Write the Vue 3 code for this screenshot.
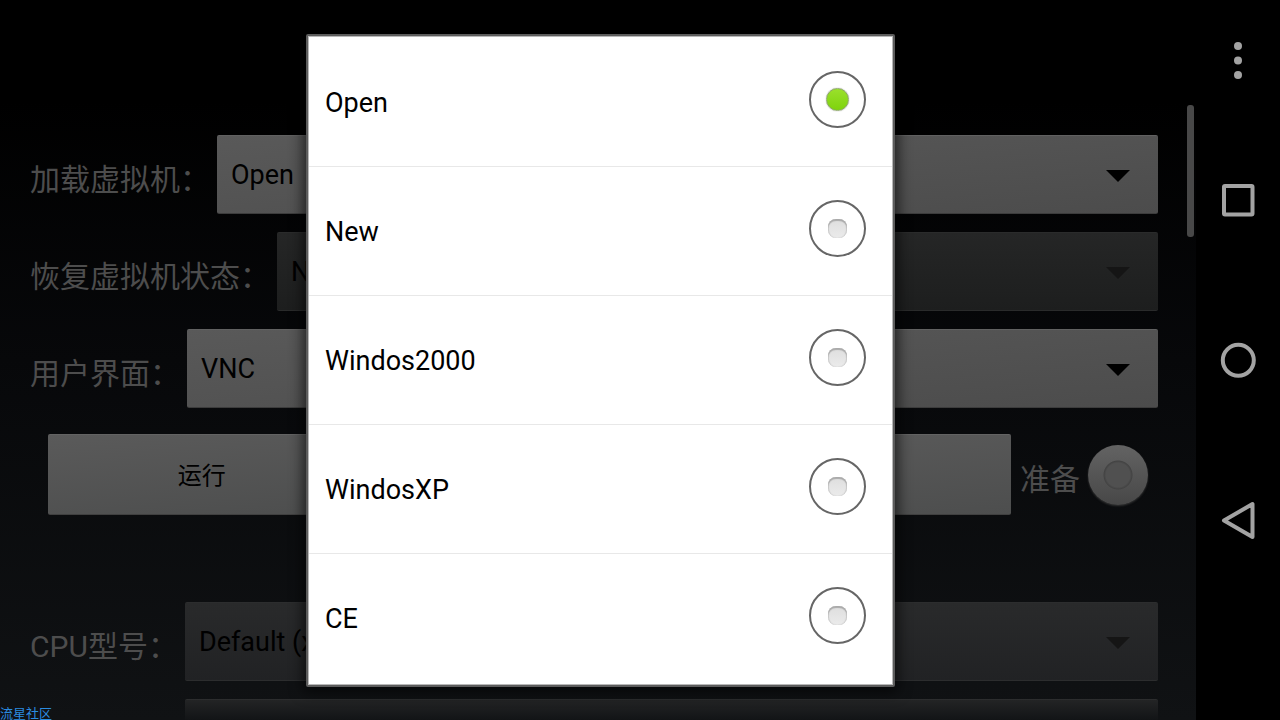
<script setup>
import { ref } from 'vue'

const choices = ['Open', 'New', 'Windos2000', 'WindosXP', 'CE']
const machine = ref('Open')

const fields = [
  { id: 'machine', label: '加载虚拟机：', value: 'Open', disabled: false },
  { id: 'snapshot', label: '恢复虚拟机状态：', value: 'None', disabled: true },
  { id: 'ui', label: '用户界面：', value: 'VNC', disabled: false }
]
</script>

<template>
  <div class="screen">
    <main class="app">
      <form class="settings" @submit.prevent>
        <div v-for="f in fields" :key="f.id" class="row">
          <label class="caption" :for="f.id">{{ f.label }}</label>
          <div class="spinner" :class="{ off: f.disabled }">
            <select :id="f.id" :disabled="f.disabled">
              <option>{{ f.value }}</option>
            </select>
            <svg class="arrow" viewBox="0 0 24 12"><path d="M0 0H24L12 12Z" /></svg>
          </div>
        </div>

        <div class="actions">
          <div class="buttons">
            <button type="button">运行</button>
            <button type="button">停止</button>
            <button type="button">重启</button>
          </div>
          <label class="caption" for="ready">准备</label>
          <input id="ready" class="status" type="radio" name="status" />
        </div>

        <div class="row">
          <label class="caption" for="cpu">CPU型号：</label>
          <div class="spinner off cool">
            <select id="cpu" disabled>
              <option>Default (x86)</option>
            </select>
            <svg class="arrow" viewBox="0 0 24 12"><path d="M0 0H24L12 12Z" /></svg>
          </div>
        </div>
        <div class="row next">
          <div class="spinner off cool fading">
            <select aria-label="选项" disabled></select>
          </div>
        </div>
      </form>

      <div class="scrollbar"></div>
      <span class="watermark">流星社区</span>

      <div class="overlay">
        <div class="dialog" role="dialog" aria-label="加载虚拟机">
          <label v-for="c in choices" :key="c" class="choice">
            <span>{{ c }}</span>
            <input v-model="machine" class="radio" type="radio" name="choice" :value="c" />
          </label>
        </div>
      </div>
    </main>

    <nav class="navbar">
      <button type="button" class="menu" aria-label="菜单">
        <svg viewBox="0 0 40 40"><g fill="#a3a3a3"><circle cx="20" cy="6" r="4" /><circle cx="20" cy="20.500" r="4" /><circle cx="20" cy="35" r="4" /></g></svg>
      </button>
      <button type="button" aria-label="最近任务">
        <svg viewBox="0 0 40 40"><rect x="6" y="6" width="28.500" height="28.500" rx="1" /></svg>
      </button>
      <button type="button" aria-label="主页">
        <svg viewBox="0 0 40 40"><circle cx="20.300" cy="20.300" r="15.500" /></svg>
      </button>
      <button type="button" aria-label="返回">
        <svg viewBox="0 0 40 40"><path d="M34.500 4V37L6 20.500Z" /></svg>
      </button>
    </nav>
  </div>
</template>

<style>
body {
  margin: 0;
  background: #000;
}
</style>

<style scoped>
* {
  box-sizing: border-box;
}
.screen {
  display: flex;
  height: 100vh;
  overflow: hidden;
  background: #000;
  font-family: Roboto, "Noto Sans CJK SC", sans-serif;
}
button,
select {
  font-family: inherit;
  border: 0;
}
.app {
  position: relative;
  flex: 1;
  min-width: 0;
  overflow: hidden;
  background: linear-gradient(#000 0, #000 14%, #07080a 50%, #101214 100%);
}
.settings {
  display: flex;
  flex-direction: column;
  gap: 18px;
  padding: 135px 38px 0 30px;
}
.row {
  display: flex;
  align-items: center;
  gap: 7px;
}
.caption {
  padding-top: 10px;
  color: #4d4d4d;
  font-size: 30px;
  line-height: 36px;
  white-space: nowrap;
}
.spinner {
  position: relative;
  flex: 1;
  min-width: 0;
  height: 79px;
}
.spinner select {
  display: block;
  width: 100%;
  height: 100%;
  padding: 0 14px;
  appearance: none;
  border-radius: 2px;
  border-top: 1px solid #616161;
  border-bottom: 1px solid #3c3c3c;
  background: linear-gradient(175deg, #595959, #4c4c4c);
  color: #000;
  font-size: 27px;
  opacity: 1;
}
.spinner.off select {
  border-color: #2a2b2b #191a1a;
  background: linear-gradient(#252626, #1d1e1e);
}
.spinner.cool select {
  border-color: #2c2d2e #1c1d1e;
  background: linear-gradient(#292a2b, #212224);
}
.spinner.fading select {
  background: linear-gradient(#232425, #121416 20px);
}
.arrow {
  position: absolute;
  top: 35px;
  right: 28px;
  width: 24px;
  height: 12px;
  pointer-events: none;
}
.off .arrow {
  fill: #151515;
}
.actions {
  display: flex;
  align-items: center;
  gap: 8px;
  margin: 8px 10px 69px 18px;
}
.buttons {
  display: flex;
  flex: 1;
  gap: 20px;
  margin-right: 1px;
}
.buttons button {
  flex: 1;
  height: 81px;
  padding: 0 0 3px;
  border-top: 1px solid #636363;
  border-bottom: 1px solid #404040;
  border-radius: 2px;
  background: linear-gradient(175deg, #5a5a5a, #4d4e4e);
  color: #000;
  font-size: 24px;
}
.status {
  width: 60px;
  height: 60px;
  margin: 0;
  appearance: none;
  border-radius: 50%;
  background:
    radial-gradient(circle, #505050 0 12px, #434343 14px, #56565600 15px),
    linear-gradient(#636363, #474747);
  box-shadow: 0 1px 2px #333;
}
.next {
  margin-left: 155px;
}
.scrollbar {
  position: absolute;
  top: 105px;
  right: 2px;
  width: 7px;
  height: 132px;
  border-radius: 3px;
  background: #484848;
}
.watermark {
  position: absolute;
  left: 0;
  bottom: 0;
  color: #2b8ce0;
  font-size: 13px;
  line-height: 13px;
}
.overlay {
  position: absolute;
  inset: 0;
  display: flex;
  align-items: center;
  justify-content: center;
  padding-left: 5px;
}
.dialog {
  width: 80%;
  max-width: 589px;
  padding: 2px 0 0;
  border: 2px solid #5c5c5c;
  border-radius: 2px;
  background: #fff;
  box-shadow: inset 0 0 0 1px #b8b8b8, 0 2px 14px 3px #000000a0;
}
.choice {
  display: flex;
  align-items: center;
  justify-content: space-between;
  height: 129px;
  margin: 0 1px;
  padding: 2px 26px 0 16px;
  border-bottom: 1px solid #e8e8e8;
  color: #000;
  font-size: 27px;
  line-height: 32px;
}
.choice:last-child {
  height: 131px;
  padding-bottom: 2px;
  border-bottom-color: transparent;
}
.radio {
  display: flex;
  align-items: center;
  justify-content: center;
  width: 57px;
  height: 57px;
  margin: 0 0 6px;
  appearance: none;
  border: 2px solid #666;
  border-radius: 50%;
}
.radio::before {
  content: "";
  width: 19px;
  height: 19px;
  border-radius: 8px;
  background: linear-gradient(#dedede, #ebebeb);
  box-shadow: inset 0 2px 1px #aaa, inset 1px 0 1px #ccc, inset -1px 0 1px #ccc;
}
.radio:checked::before {
  width: 21px;
  height: 21px;
  border: 1px solid #8ca866;
  border-radius: 50%;
  background: linear-gradient(#9ae02c, #7fd30d);
  box-shadow: 0 0 1px #888;
}
.navbar {
  display: flex;
  flex-direction: column;
  width: 84px;
  background: #000;
}
.navbar button {
  display: flex;
  align-items: center;
  justify-content: center;
  height: 160px;
  padding: 0;
  background: none;
}
.navbar .menu {
  height: 120px;
}
.navbar svg {
  width: 40px;
  height: 40px;
  fill: none;
  stroke: #a3a3a3;
  stroke-width: 4;
  stroke-linejoin: round;
}
.navbar .menu svg {
  stroke: none;
}
</style>
